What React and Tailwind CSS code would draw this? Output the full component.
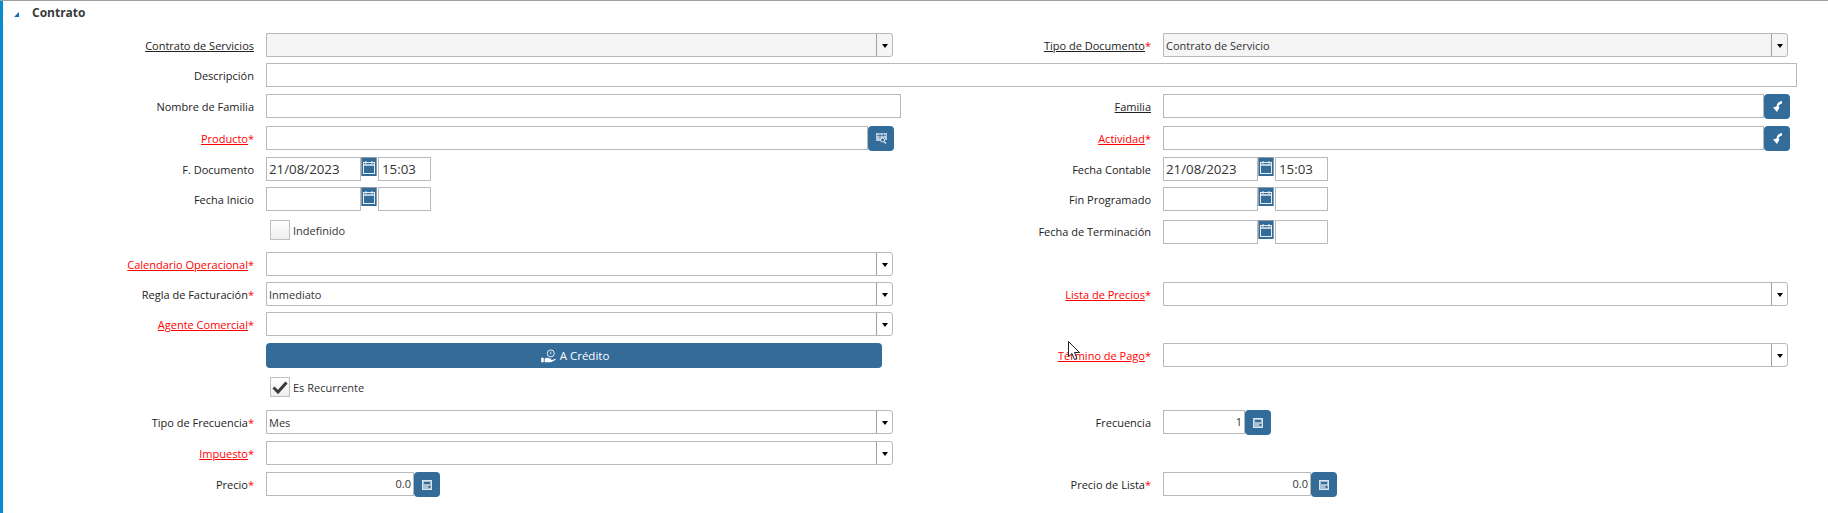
import React from "react";

const font = { fontFamily: '"Open Sans", sans-serif' };

function Label({ children, req, link, danger, flush }) {
  return (
    <div className={`shrink-0 text-right text-[11px] leading-[24px] text-[#222] ${flush ? "" : "mt-px"}`}>
      <span className={`${link ? "underline" : ""} ${danger ? "text-[#f00]" : ""}`}>{children}</span>
      {req && <span className="text-[#f00]">*</span>}
    </div>
  );
}

const Caret = () => (
  <span className="flex h-full w-4 shrink-0 items-center justify-center rounded-r-[3px] border-l border-[#a0a0a0]">
    <span className="mt-px h-0 w-0 border-x-[3.5px] border-t-[4px] border-x-transparent border-t-black" />
  </span>
);

function Select({ w, value, disabled }) {
  return (
    <div className={`flex h-6 items-center rounded-r-[3px] border border-[#b9b9b9] ${w} ${disabled ? "bg-[#f5f5f5]" : "bg-white"}`}>
      <span className="flex-1 px-[2px] pt-[2px] text-[11px] text-[#333]">{value}</span>
      <Caret />
    </div>
  );
}

function Input({ w, value, right }) {
  return <div className={`h-6 border border-[#b9b9b9] bg-white px-[2px] text-[11px] leading-[22px] text-[#333] ${w} ${right ? "text-right" : ""}`}>{value}</div>;
}

const IconButton = ({ children }) => (
  <span className="flex h-[25px] w-[26px] shrink-0 items-center justify-center rounded-[4px] bg-[#336b99]">{children}</span>
);

const ZoomIcon = () => (
  <svg width="11" height="11" viewBox="0 0 11 11" fill="none">
    <path d="M0 0h11v7H9V5H5v3H0z" fill="#b9cbda" />
    <path d="M1 2.500h9M4 0.500v5M7.500 0.500v3" stroke="#336b99" strokeWidth="0.700" />
    <circle cx="6.500" cy="7" r="2" stroke="#dfe8ef" strokeWidth="1" />
    <path d="M8 8.500l2 2" stroke="#dfe8ef" strokeWidth="1.200" />
  </svg>
);

const BackIcon = () => (
  <svg width="9" height="11" viewBox="0 0 9 11" fill="white">
    <path d="M9 0C6 .5 4 2 3.500 5.500L0 6.500 4 11 6.500 6.500 5.500 5.500C6 4 7 3 9 2.500Z" />
  </svg>
);

const CalcIcon = () => (
  <svg width="10" height="10" viewBox="0 0 10 10">
    <rect x="0.500" y="0.500" width="9" height="9" fill="#a9c0d3" stroke="#dbe5ed" />
    <rect x="2" y="2" width="6" height="2" fill="#336b99" />
    <rect x="6.500" y="6" width="2" height="2" fill="#336b99" />
  </svg>
);

const CalendarIcon = () => (
  <svg width="12" height="13" viewBox="0 0 12 13" fill="none">
    <rect x="0.500" y="1.500" width="11" height="11" stroke="#e6eef4" />
    <path d="M0.500 4h11" stroke="#e6eef4" strokeWidth="1.500" />
    <path d="M3 0v3M9 0v3" stroke="#e6eef4" />
  </svg>
);

function DateTime({ date, time }) {
  return (
    <div className="flex h-6 items-start text-[13.3px] leading-[22px] text-[#333]">
      <div className="h-6 w-[95px] border border-[#b9b9b9] px-[2px]">{date}</div>
      <span className="flex h-[19px] w-4 items-end justify-center border-x border-t border-[#8a9aa8] bg-[#336b99] pb-[2px]"><CalendarIcon /></span>
      <div className="ml-px h-6 w-[53px] border border-[#b9b9b9] px-[3px]">{time}</div>
    </div>
  );
}

function Check({ checked, label }) {
  return (
    <div className="ml-1 flex h-5 items-center gap-[3px]">
      <span className="flex h-5 w-5 items-center justify-center border border-[#b9c0c6] bg-gradient-to-b from-white to-[#eeeeee]">
        {checked && (
          <svg width="16" height="13" viewBox="0 0 16 13" fill="none">
            <path d="M1.500 6.500L6 11 14.500 1.500" stroke="#3b3b3b" strokeWidth="3" />
          </svg>
        )}
      </span>
      <span className="pt-[2px] text-[11px] text-[#333]">{label}</span>
    </div>
  );
}

function Row({ h, left, right, leftLabel, rightLabel }) {
  return (
    <div className={`flex ${h}`}>
      <div className="w-[251px] shrink-0">{leftLabel}</div>
      <div className="ml-3 w-[640px] shrink-0">{left}</div>
      <div className="w-[245px] shrink-0">{rightLabel}</div>
      <div className="ml-3 flex-1">{right}</div>
    </div>
  );
}

export default function App() {
  return (
    <div style={font} className="relative h-[513px] w-[1828px] overflow-hidden border-t border-[#9e9e9e] bg-white">
      <div className="h-[512px] border-l-[3px] border-[#0a8bd0]">
        <div className="flex h-[32px] items-start pt-[3px]">
          <span className="ml-[11px] mt-[8px] h-0 w-0 border-b-[5px] border-l-[5px] border-b-[#1668b8] border-l-transparent" />
          <span className="ml-[13px] text-[12px] font-bold leading-[18px] text-[#3a3a3a]">Contrato</span>
        </div>
        <div>
          <Row h="h-[30px]"
            leftLabel={<Label link>Contrato de Servicios</Label>}
            left={<Select w="w-[627px]" disabled />}
            rightLabel={<Label link req>Tipo de Documento</Label>}
            right={<Select w="w-[625px]" value="Contrato de Servicio" disabled />} />
          <Row h="h-[31px]"
            leftLabel={<Label>Descripción</Label>}
            left={<div className="h-6 w-[1531px] border border-[#b9b9b9] bg-white" />} />
          <Row h="h-[32px]"
            leftLabel={<Label>Nombre de Familia</Label>}
            left={<Input w="w-[635px]" />}
            rightLabel={<Label link>Familia</Label>}
            right={<div className="flex"><Input w="w-[601px]" /><IconButton><BackIcon /></IconButton></div>} />
          <Row h="h-[31px]"
            leftLabel={<Label link danger req>Producto</Label>}
            left={<div className="flex"><Input w="w-[602px]" /><IconButton><ZoomIcon /></IconButton></div>}
            rightLabel={<Label link danger req>Actividad</Label>}
            right={<div className="flex"><Input w="w-[601px]" /><IconButton><BackIcon /></IconButton></div>} />
          <Row h="h-[30px]"
            leftLabel={<Label>F. Documento</Label>}
            left={<DateTime date="21/08/2023" time="15:03" />}
            rightLabel={<Label>Fecha Contable</Label>}
            right={<DateTime date="21/08/2023" time="15:03" />} />
          <Row h="h-[33px]"
            leftLabel={<Label>Fecha Inicio</Label>}
            left={<DateTime />}
            rightLabel={<Label>Fin Programado</Label>}
            right={<DateTime />} />
          <Row h="h-[32px]"
            left={<Check label="Indefinido" />}
            rightLabel={<Label flush>Fecha de Terminación</Label>}
            right={<DateTime />} />
          <Row h="h-[30px]"
            leftLabel={<Label link danger req>Calendario Operacional</Label>}
            left={<Select w="w-[627px]" />} />
          <Row h="h-[30px]"
            leftLabel={<Label req>Regla de Facturación</Label>}
            left={<Select w="w-[627px]" value="Inmediato" />}
            rightLabel={<Label link danger req>Lista de Precios</Label>}
            right={<Select w="w-[625px]" />} />
          <Row h="h-[31px]"
            leftLabel={<Label link danger req>Agente Comercial</Label>}
            left={<Select w="w-[627px]" />} />
          <Row h="h-[34px]"
            left={
              <button className="flex h-[25px] w-[616px] items-center justify-center gap-[3px] rounded-[4px] bg-[#336b99] pl-[2px] text-[11.5px] text-white">
                <svg width="16" height="14" viewBox="0 0 18 16" fill="none">
                  <circle cx="11" cy="5" r="4" stroke="white" />
                  <path d="M11 3v3" stroke="white" />
                  <path d="M0 10h3v5H0zM4 11c3-2 5 0 7 0s0 2-2 1.500c3 .5 5-.5 7-1.500 1 0 1 1 0 1.500-3 2-6 3-9 2.500H4z" fill="white" />
                </svg>
                A Crédito
              </button>
            }
            rightLabel={<Label link danger req>Término de Pago</Label>}
            right={<Select w="w-[625px]" />} />
          <Row h="h-[33px]" left={<Check checked label="Es Recurrente" />} />
          <Row h="h-[31px]"
            leftLabel={<Label req>Tipo de Frecuencia</Label>}
            left={<Select w="w-[627px]" value="Mes" />}
            rightLabel={<Label>Frecuencia</Label>}
            right={<div className="flex"><Input w="w-[82px]" value="1" right /><IconButton><CalcIcon /></IconButton></div>} />
          <Row h="h-[31px]"
            leftLabel={<Label link danger req>Impuesto</Label>}
            left={<Select w="w-[627px]" />} />
          <Row h="h-[31px]"
            leftLabel={<Label req>Precio</Label>}
            left={<div className="flex"><Input w="w-[148px]" value="0.0" right /><IconButton><CalcIcon /></IconButton></div>}
            rightLabel={<Label req>Precio de Lista</Label>}
            right={<div className="flex"><Input w="w-[148px]" value="0.0" right /><IconButton><CalcIcon /></IconButton></div>} />
        </div>
      </div>
      <svg className="absolute left-[1068px] top-[340px]" width="13" height="20" viewBox="0 0 13 20">
        <path d="M0.500 0.500V15.500L4 12.500 6.500 18.500 9 17.500 6.500 11.500H11.500Z" fill="white" stroke="#222" strokeWidth="1" />
      </svg>
    </div>
  );
}
